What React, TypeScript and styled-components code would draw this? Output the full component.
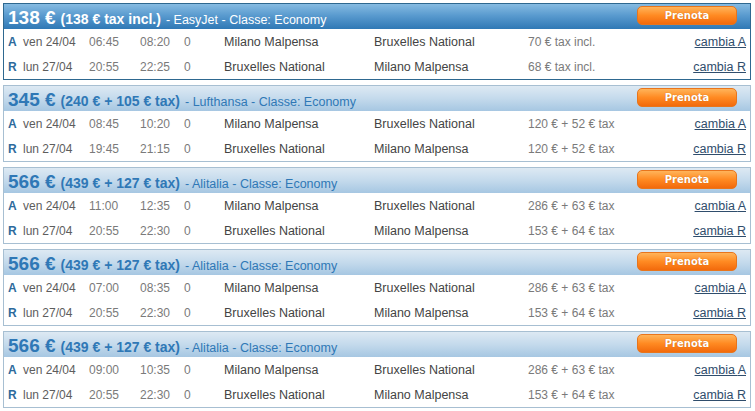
import styled, {createGlobalStyle, css} from 'styled-components';

const GlobalStyle = createGlobalStyle`
  body {
    margin: 0;
    background: #fff;
    font-family: "Liberation Sans", Arial, sans-serif;
  }
`;

type Leg = {
  dir: 'A' | 'R';
  date: string;
  dep: string;
  arr: string;
  stops: string;
  from: string;
  to: string;
  price: string;
};

type Offer = {
  total: string;
  detail: string;
  airline: string;
  legs: Leg[];
};

const MXP = 'Milano Malpensa';
const BRU = 'Bruxelles National';

const offers: Offer[] = [
  {
    total: '138 €',
    detail: '(138 € tax incl.)',
    airline: 'EasyJet',
    legs: [
      {dir: 'A', date: 'ven 24/04', dep: '06:45', arr: '08:20', stops: '0', from: MXP, to: BRU, price: '70 € tax incl.'},
      {dir: 'R', date: 'lun 27/04', dep: '20:55', arr: '22:25', stops: '0', from: BRU, to: MXP, price: '68 € tax incl.'},
    ],
  },
  {
    total: '345 €',
    detail: '(240 € + 105 € tax)',
    airline: 'Lufthansa',
    legs: [
      {dir: 'A', date: 'ven 24/04', dep: '08:45', arr: '10:20', stops: '0', from: MXP, to: BRU, price: '120 € + 52 € tax'},
      {dir: 'R', date: 'lun 27/04', dep: '19:45', arr: '21:15', stops: '0', from: BRU, to: MXP, price: '120 € + 52 € tax'},
    ],
  },
  {
    total: '566 €',
    detail: '(439 € + 127 € tax)',
    airline: 'Alitalia',
    legs: [
      {dir: 'A', date: 'ven 24/04', dep: '11:00', arr: '12:35', stops: '0', from: MXP, to: BRU, price: '286 € + 63 € tax'},
      {dir: 'R', date: 'lun 27/04', dep: '20:55', arr: '22:30', stops: '0', from: BRU, to: MXP, price: '153 € + 64 € tax'},
    ],
  },
  {
    total: '566 €',
    detail: '(439 € + 127 € tax)',
    airline: 'Alitalia',
    legs: [
      {dir: 'A', date: 'ven 24/04', dep: '07:00', arr: '08:35', stops: '0', from: MXP, to: BRU, price: '286 € + 63 € tax'},
      {dir: 'R', date: 'lun 27/04', dep: '20:55', arr: '22:30', stops: '0', from: BRU, to: MXP, price: '153 € + 64 € tax'},
    ],
  },
  {
    total: '566 €',
    detail: '(439 € + 127 € tax)',
    airline: 'Alitalia',
    legs: [
      {dir: 'A', date: 'ven 24/04', dep: '09:00', arr: '10:35', stops: '0', from: MXP, to: BRU, price: '286 € + 63 € tax'},
      {dir: 'R', date: 'lun 27/04', dep: '20:55', arr: '22:30', stops: '0', from: BRU, to: MXP, price: '153 € + 64 € tax'},
    ],
  },
];

const List = styled.div`
  display: flex;
  flex-direction: column;
  gap: 5px;
  padding: 3px 4px 3px 3px;
`;

const Card = styled.div<{$active?: boolean}>`
  border: 1px solid ${p => (p.$active ? '#2e6890' : '#a7bfd2')};
  background: #fff;
`;

const Header = styled.div<{$active?: boolean}>`
  height: 25px;
  display: flex;
  align-items: center;
  padding: 0 13px 0 4px;
  ${p =>
    p.$active
      ? css`
          background: linear-gradient(#86bbe2, #5a9bcf 45%, #2f78b5);
          color: #fff;
        `
      : css`
          background: linear-gradient(#dde9f3, #c4daec 50%, #a6c7e2);
          color: #2f78b6;
        `}
`;

const Title = styled.div`
  flex: 1;
  white-space: nowrap;
  display: flex;
  align-items: baseline;
  gap: 5px;
  padding-top: 2px;
`;

const Total = styled.span`
  font-size: 19px;
  font-weight: bold;
`;

const Detail = styled.span`
  font-size: 14px;
  font-weight: bold;
`;

const Carrier = styled.span`
  font-size: 12.5px;
`;

const BookButton = styled.button`
  width: 100px;
  height: 19px;
  margin-top: -2px;
  border: 1px solid #e8751c;
  border-radius: 5px;
  background: linear-gradient(#ffb45a, #ff8a22 50%, #f26a0c);
  color: #fff;
  font-family: "DejaVu Sans", Verdana, sans-serif;
  font-size: 10px;
  font-weight: bold;
  text-shadow: 0 0 1px #c05a00;
  padding: 0;
  cursor: pointer;
`;

const Row = styled.div`
  display: grid;
  grid-template-columns: 15px 66px 51px 44px 40px 150px 154px 1fr auto;
  align-items: center;
  height: 25px;
  padding: 0 4px 0 4px;
  font-size: 12px;
  color: #777;
`;

const Dir = styled.span`
  font-weight: bold;
  color: #2d6a9c;
`;

const Date = styled.span`
  color: #5d5d5d;
`;

const Time = styled.span`
  color: #7a7a7a;
`;

const Airport = styled.span`
  color: #444;
  font-size: 12.5px;
`;

const Price = styled.span`
  color: #7a7a7a;
`;

const Change = styled.a`
  color: #2f4d6c;
  text-decoration: underline;
  font-size: 12.5px;
`;

export default function App() {
  return (
    <>
      <GlobalStyle />
      <List>
        {offers.map((o, i) => (
          <Card key={i} $active={i === 0}>
            <Header $active={i === 0}>
              <Title>
                <Total>{o.total}</Total>
                <Detail>{o.detail}</Detail>
                <Carrier>- {o.airline} - Classe: Economy</Carrier>
              </Title>
              <BookButton>Prenota</BookButton>
            </Header>
            {o.legs.map(l => (
              <Row key={l.dir}>
                <Dir>{l.dir}</Dir>
                <Date>{l.date}</Date>
                <Time>{l.dep}</Time>
                <Time>{l.arr}</Time>
                <Time>{l.stops}</Time>
                <Airport>{l.from}</Airport>
                <Airport>{l.to}</Airport>
                <Price>{l.price}</Price>
                <Change href="#">cambia {l.dir}</Change>
              </Row>
            ))}
          </Card>
        ))}
      </List>
    </>
  );
}
